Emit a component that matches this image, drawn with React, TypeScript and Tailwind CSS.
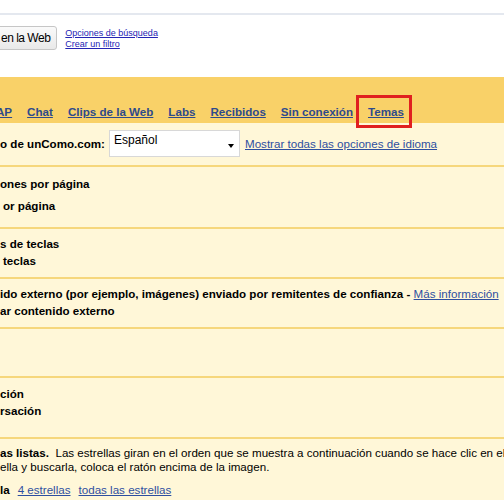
import React from 'react';

const tabs = ['Chat', 'Clips de la Web', 'Labs', 'Recibidos', 'Sin conexión'];

function Row({ className, children }: { className: string; children: React.ReactNode }) {
  return <div className={`border-b-2 border-[#f6d77c] ${className}`}>{children}</div>;
}

export default function App() {
  return (
    <div className="w-[504px] h-[500px] overflow-hidden bg-white font-['Liberation_Sans',Arial,sans-serif] text-[11.6px] text-black">
      {/* search header */}
      <div className="h-[13px]" />
      <div className="h-[2px] bg-[#e4e8ef]" />
      <div className="flex items-start gap-[8px] pt-[11px] h-[62px]">
        <button className="-ml-[4px] h-[24px] pl-[4px] pr-[6px] rounded-[3px] border border-[#c6c6c6] bg-gradient-to-b from-[#fafafa] to-[#e9e9e9] text-[12px] tracking-[-0.5px] leading-none">
          en la Web
        </button>
        <div className="flex flex-col text-[9px] leading-[11px] pt-[2px] text-[#2424b4] underline">
          <span>Opciones de búsqueda</span>
          <span>Crear un filtro</span>
        </div>
      </div>

      {/* tabs band */}
      <div className="relative z-10 h-[46px] bg-[#f9d168] flex items-end pb-[3px] gap-[15px] font-bold">
        <span className="-ml-[4px] text-[#2e4a8c] underline">AP</span>
        {tabs.map((t) => (
          <span key={t} className="text-[#2e4a8c] underline">{t}</span>
        ))}
        <span className="relative text-[#2e4a8c] underline">
          Temas
          <span className="absolute -left-[12px] -right-[8px] -top-[8px] -bottom-[8px] border-[3px] border-[#e0201f]" />
        </span>
      </div>

      <div className="bg-[#fff7d8]">
        <Row className="h-[44px] flex items-center">
          <span className="font-bold">o de unComo.com:</span>
          <div className="ml-[4px] w-[131px] h-[27px] border border-[#d8d8d8] bg-white flex items-center justify-between pl-[4px] pr-[5px] -mt-[2px]">
            <span className="text-[12px] -mt-[6px]">Español</span>
            <span className="w-0 h-0 border-l-[3px] border-r-[3px] border-t-[4px] border-l-transparent border-r-transparent border-t-black mt-[6px]" />
          </div>
          <span className="ml-[5px] text-[#2e4fa0] underline">Mostrar todas las opciones de idioma</span>
        </Row>
        <Row className="h-[62px] pt-[8px] font-bold leading-[17px] flex flex-col gap-[5px]">
          <span>ones por página</span>
          <span className="pl-[3px]">or página</span>
        </Row>
        <Row className="h-[50px] pt-[6px] font-bold leading-[17px] flex flex-col">
          <span>s de teclas</span>
          <span className="pl-[3px]">teclas</span>
        </Row>
        <Row className="h-[50px] pt-[6px] leading-[17px] flex flex-col">
          <span className="whitespace-nowrap">
            <b>ido externo (por ejemplo, imágenes) enviado por remitentes de confianza - </b>
            <span className="text-[#2e4fa0] underline">Más información</span>
          </span>
          <span className="font-bold">ar contenido externo</span>
        </Row>
        <Row className="h-[49px]">{null}</Row>
        <Row className="h-[61px] pt-[7px] font-bold leading-[17px] flex flex-col">
          <span>ción</span>
          <span>rsación</span>
        </Row>
        <div className="h-[70px] pt-[7px] flex flex-col">
          <span className="whitespace-nowrap leading-[14px]">
            <b>as listas.</b>&nbsp; Las estrellas giran en el orden que se muestra a continuación cuando se hace clic en el
          </span>
          <span className="whitespace-nowrap leading-[14px]">ella y buscarla, coloca el ratón encima de la imagen.</span>
          <span className="mt-[9px] whitespace-nowrap leading-[14px]">
            <b>la</b>
            <span className="ml-[8px] text-[#2e4fa0] underline">4 estrellas</span>
            <span className="ml-[8px] text-[#2e4fa0] underline">todas las estrellas</span>
          </span>
        </div>
      </div>
    </div>
  );
}
